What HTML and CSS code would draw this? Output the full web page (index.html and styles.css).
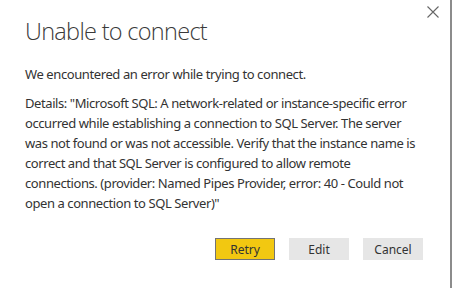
FILE: index.html
```html
<!DOCTYPE html>
<html>
<head>
<meta charset="utf-8">
<link rel="stylesheet" href="styles.css">
</head>
<body>
<div class="dialog">
  <button class="close" aria-label="Close">
    <svg width="12" height="12" viewBox="0 0 12 12"><path d="M0.5 0.5 L11.5 11.5 M11.5 0.5 L0.5 11.5" stroke="#666" stroke-width="1.1" fill="none"/></svg>
  </button>
  <h1 class="title">Unable to connect</h1>
  <p class="msg">We encountered an error while trying to connect.</p>
  <p class="details">Details: "Microsoft SQL: A network-related or instance-specific error occurred while establishing a connection to SQL Server. The server was not found or was not accessible. Verify that the instance name is correct and that SQL Server is configured to allow remote connections. (provider: Named Pipes Provider, error: 40 - Could not open a connection to SQL Server)"</p>
  <div class="actions">
    <button class="btn primary">Retry</button>
    <button class="btn">Edit</button>
    <button class="btn">Cancel</button>
  </div>
</div>
</body>
</html>
```
FILE: styles.css
```css
html, body {
  margin: 0;
  padding: 0;
  background: #fff;
}
body {
  width: 456px;
  height: 288px;
  overflow: hidden;
  font-family: "Noto Sans", "Open Sans", sans-serif;
  color: #333;
}
.dialog {
  position: relative;
  width: 452px;
  height: 288px;
  box-sizing: border-box;
  border-right: 2px solid #8c8c8c;
  padding: 13px 0 0 25px;
}
.close {
  position: absolute;
  top: 5px;
  right: 10px;
  width: 14px;
  height: 14px;
  padding: 1px;
  border: 0;
  background: none;
  display: flex;
  align-items: center;
  justify-content: center;
}
.title {
  margin: 0;
  font-family: "Open Sans", sans-serif;
  font-weight: 300;
  font-size: 23.5px;
  line-height: 36px;
  color: #3a3a3a;
  letter-spacing: -0.7px;
}
.msg {
  margin: 15px 0 0;
  font-size: 13px;
  line-height: 20px;
  letter-spacing: -0.4px;
}
.details {
  margin: 9px 0 0;
  width: 400px;
  font-size: 13px;
  line-height: 20px;
  letter-spacing: -0.42px;
}
.actions {
  display: flex;
  gap: 14px;
  justify-content: flex-end;
  margin: 25px 27px 0 0;
}
.btn {
  width: 60px;
  height: 22px;
  box-sizing: border-box;
  border: 0;
  background: #e6e6e6;
  font-family: "Noto Sans", sans-serif;
  font-size: 12px;
  color: #333;
  padding: 0;
}
.btn.primary {
  background: #f2c811;
  border: 1px solid #737373;
}
```
